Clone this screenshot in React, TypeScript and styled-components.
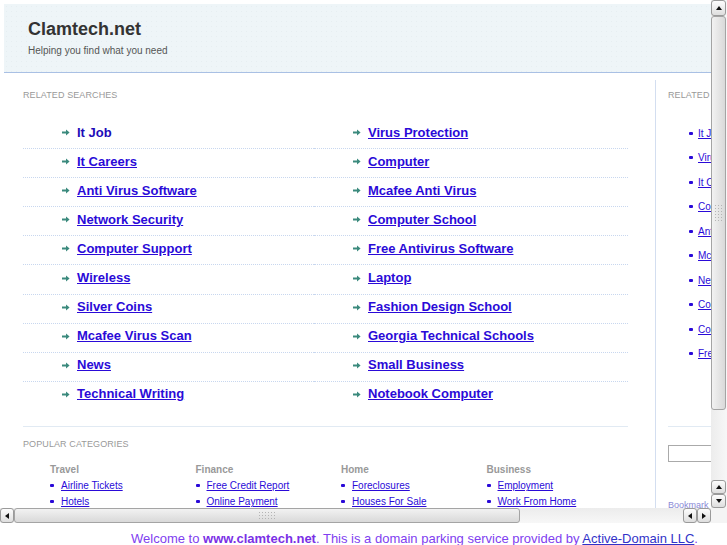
import styled, { createGlobalStyle } from "styled-components";

const GlobalStyle = createGlobalStyle`
  body {
    margin: 0;
    background: #fff;
    font-family: "Liberation Sans", Arial, sans-serif;
  }
`;

const searches: [string, string][] = [
    ["It Job", "Virus Protection"],
    ["It Careers", "Computer"],
    ["Anti Virus Software", "Mcafee Anti Virus"],
    ["Network Security", "Computer School"],
    ["Computer Support", "Free Antivirus Software"],
    ["Wireless", "Laptop"],
    ["Silver Coins", "Fashion Design School"],
    ["Mcafee Virus Scan", "Georgia Technical Schools"],
    ["News", "Small Business"],
    ["Technical Writing", "Notebook Computer"],
];

const categories = [
    {title: "Travel", items: ["Airline Tickets", "Hotels", "Car Rental"]},
    {title: "Finance", items: ["Free Credit Report", "Online Payment", "Credit Card"]},
    {title: "Home", items: ["Foreclosures", "Houses For Sale", "Mortgage"]},
    {title: "Business", items: ["Employment", "Work From Home", "Franchise"]},
];

const sideLinks = [
    "It Job", "Virus Protection", "It Careers", "Computer", "Anti Virus Software",
    "Mcafee Anti Virus", "Network Security", "Computer School", "Computer Support",
    "Free Antivirus Software",
];

const Frame = styled.div`
    display: grid;
    grid-template-columns: 711px 16px;
    grid-template-rows: 508px 15px;
    width: 727px;
`;

const Viewport = styled.div`
    overflow: hidden;
    background: #fff;
`;

const Page = styled.div`
    width: 900px;
    padding: 4px 0 0 4px;
`;

const Header = styled.header`
    padding: 13px 0 0 24px;
    box-sizing: border-box;
    height: 69px;
    background-color: #eef5f8;
    background-image: radial-gradient(#e6eef1 0.5px, transparent 0.7px);
    background-size: 5px 5px;
    border-bottom: 1px solid #a9c0e4;
`;

const Title = styled.h1`
    margin: 0;
    font-size: 18px;
    line-height: 24px;
    font-weight: bold;
    color: #333;
`;

const Tagline = styled.div`
    margin-top: 3px;
    font-size: 10px;
    line-height: 13px;
    color: #555;
`;

const Body = styled.div`
    display: flex;
    padding: 7px 0 0 19px;
`;

const Main = styled.main`
    width: 605px;
    flex: none;
`;

const SectionLabel = styled.div`
    padding-top: 10px;
    font-size: 9px;
    line-height: 11px;
    letter-spacing: 0.1px;
    text-transform: uppercase;
    color: #999;
`;

const SearchGrid = styled.div`
    display: grid;
    grid-template-columns: 291px 314px;
    margin-top: 19px;
`;

const SearchCell = styled.div<{ $last: boolean }>`
    display: flex;
    align-items: center;
    height: 29.1px;
    box-sizing: border-box;
    padding: 0 0 3px 39px;
    border-bottom: 1px dotted ${(p) => (p.$last ? "transparent" : "#c8d7ef")};
`;

const Arrow = () => (
    <svg width="8" height="7" viewBox="0 0 8 7" style={{marginRight: 7, flex: "none"}}>
        <path d="M0 2.6h4V0.4L7.6 3.5 4 6.6V4.4H0z" fill="#3b8a7d"/>
    </svg>
);

const SearchLink = styled.a<{ $plain?: boolean }>`
    font-size: 13px;
    font-weight: bold;
    line-height: 16px;
    color: ${(p) => (p.$plain ? "#1d0bb8" : "#2a0ad8")};
    text-decoration: ${(p) => (p.$plain ? "none" : "underline")};
    cursor: pointer;
    white-space: nowrap;
`;

const Rule = styled.hr`
    margin: 15px 0 0;
    border: none;
    border-top: 1px solid #e1eaf3;
`;

const PopLabel = styled(SectionLabel)`
    padding-top: 12px;
`;

const CatGrid = styled.div`
    display: grid;
    grid-template-columns: repeat(4, 145.5px);
    margin: 13px 0 0 27px;
`;

const CatTitle = styled.div`
    font-size: 10px;
    font-weight: bold;
    line-height: 13px;
    color: #999;
    margin-bottom: 2px;
`;

const CatList = styled.ul`
    margin: 0;
    padding: 0;
    list-style: none;
`;

const CatItem = styled.li`
    display: flex;
    align-items: center;
    height: 16px;
    font-size: 10px;

    &::before {
        content: "";
        width: 4px;
        height: 3px;
        margin-right: 7px;
        border-radius: 1px;
        background: #2a0ad8;
        flex: none;
    }
`;

const SmallLink = styled.a`
    color: #2a0ad8;
    text-decoration: underline;
    white-space: nowrap;
    cursor: pointer;
`;

const Sidebar = styled.aside`
    margin-left: 27px;
    padding-left: 12px;
    border-left: 1px solid #d3def0;
    width: 200px;
    flex: none;
`;

const SideList = styled.ul`
    margin: 20px 0 0 21px;
    padding: 0;
    list-style: none;
`;

const SideItem = styled.li`
    display: flex;
    align-items: center;
    height: 24.5px;
    font-size: 10px;

    &::before {
        content: "";
        width: 4px;
        height: 3px;
        margin-right: 5px;
        border-radius: 1px;
        background: #2a0ad8;
        flex: none;
    }
`;

const SideRule = styled.hr`
    margin: 60px 0 0;
    border: none;
    border-top: 1px solid #e1eaf3;
`;

const SearchBox = styled.input`
    display: block;
    margin-top: 18px;
    width: 120px;
    height: 17px;
    box-sizing: border-box;
    border: 1px solid #aaa;
    padding: 0;
`;

const Bookmark = styled.div`
    margin-top: 38px;
    font-size: 9px;
    line-height: 11px;
    color: #8a8ad6;
`;

const ScrollV = styled.div`
    display: flex;
    flex-direction: column;
    background: linear-gradient(90deg, #ececec, #f7f7f7);
`;

const ScrollH = styled.div`
    display: flex;
    background: linear-gradient(180deg, #ececec, #f7f7f7);
`;

const Corner = styled.div`
    background: #f4f4f4;
`;

const StepButton = styled.div<{ $dir: "up" | "down" | "left" | "right"; $size: number }>`
    flex: none;
    width: ${(p) => (p.$dir === "up" || p.$dir === "down" ? "15px" : `${p.$size}px`)};
    height: ${(p) => (p.$dir === "up" || p.$dir === "down" ? `${p.$size}px` : "15px")};
    box-sizing: border-box;
    border: 1px solid #9a9a9a;
    border-radius: 3px;
    background: linear-gradient(180deg, #fdfdfd, #dedede);
    display: flex;
    align-items: center;
    justify-content: center;

    &::after {
        content: "";
        border: 3.5px solid transparent;
        ${(p) => p.$dir === "up" && "border-bottom: 4px solid #111; border-top-width: 0;"}
        ${(p) => p.$dir === "down" && "border-top: 4px solid #111; border-bottom-width: 0;"}
        ${(p) => p.$dir === "left" && "border-right: 4px solid #111; border-left-width: 0;"}
        ${(p) => p.$dir === "right" && "border-left: 4px solid #111; border-right-width: 0;"}
    }
`;

const Thumb = styled.div<{ $vertical: boolean; $length: number }>`
    flex: none;
    box-sizing: border-box;
    ${(p) => (p.$vertical ? `height: ${p.$length}px; width: 15px;` : `width: ${p.$length}px; height: 15px;`)}
    border: 1px solid #a4a4a4;
    border-radius: 3px;
    background: ${(p) =>
        p.$vertical
            ? "linear-gradient(90deg, #f2f2f2, #d9d9d9)"
            : "linear-gradient(180deg, #f2f2f2, #d9d9d9)"};
    display: flex;
    align-items: center;
    justify-content: center;

    &::after {
        content: "";
        width: ${(p) => (p.$vertical ? "10px" : "18px")};
        height: ${(p) => (p.$vertical ? "18px" : "10px")};
        background-image: radial-gradient(#b4b4b4 0.8px, transparent 1px);
        background-size: 3px 3px;
    }
`;

const Track = styled.div`
    flex: 1;
`;

const Footer = styled.footer`
    padding: 8px 0 0 131px;
    font-size: 13px;
    line-height: 15px;
    white-space: nowrap;
    color: #8040f0;
`;

const Strong = styled.b`
    color: #7a30e6;
`;

const FooterLink = styled.a`
    color: #3232c8;
    text-decoration: underline;
    cursor: pointer;
`;

export default function App() {
    return (
        <>
            <GlobalStyle/>
            <Frame>
                <Viewport>
                    <Page>
                        <Header>
                            <Title>Clamtech.net</Title>
                            <Tagline>Helping you find what you need</Tagline>
                        </Header>
                        <Body>
                            <Main>
                                <SectionLabel>Related Searches</SectionLabel>
                                <SearchGrid>
                                    {searches.map(([a, b], i) => (
                                        [a, b].map((label, j) => (
                                            <SearchCell key={`${i}-${j}`} $last={i === searches.length - 1}>
                                                <Arrow/>
                                                <SearchLink $plain={i === 0 && j === 0}>{label}</SearchLink>
                                            </SearchCell>
                                        ))
                                    ))}
                                </SearchGrid>
                                <Rule/>
                                <PopLabel>Popular Categories</PopLabel>
                                <CatGrid>
                                    {categories.map((cat) => (
                                        <div key={cat.title}>
                                            <CatTitle>{cat.title}</CatTitle>
                                            <CatList>
                                                {cat.items.map((item) => (
                                                    <CatItem key={item}>
                                                        <SmallLink>{item}</SmallLink>
                                                    </CatItem>
                                                ))}
                                            </CatList>
                                        </div>
                                    ))}
                                </CatGrid>
                            </Main>
                            <Sidebar>
                                <SectionLabel>Related Searches</SectionLabel>
                                <SideList>
                                    {sideLinks.map((l) => (
                                        <SideItem key={l}><SmallLink>{l}</SmallLink></SideItem>
                                    ))}
                                </SideList>
                                <SideRule/>
                                <SearchBox/>
                                <Bookmark>Bookmark this page</Bookmark>
                            </Sidebar>
                        </Body>
                    </Page>
                </Viewport>
                <ScrollV>
                    <StepButton $dir="up" $size={16}/>
                    <Thumb $vertical $length={394}/>
                    <Track/>
                    <StepButton $dir="up" $size={14}/>
                    <StepButton $dir="down" $size={14}/>
                </ScrollV>
                <ScrollH>
                    <StepButton $dir="left" $size={14}/>
                    <Thumb $vertical={false} $length={506}/>
                    <Track/>
                    <StepButton $dir="left" $size={14}/>
                    <StepButton $dir="right" $size={14}/>
                </ScrollH>
                <Corner/>
            </Frame>
            <Footer>
                Welcome to <Strong>www.clamtech.net</Strong>. This is a domain parking service provided by{" "}
                <FooterLink>Active-Domain LLC</FooterLink>.
            </Footer>
        </>
    );
}
